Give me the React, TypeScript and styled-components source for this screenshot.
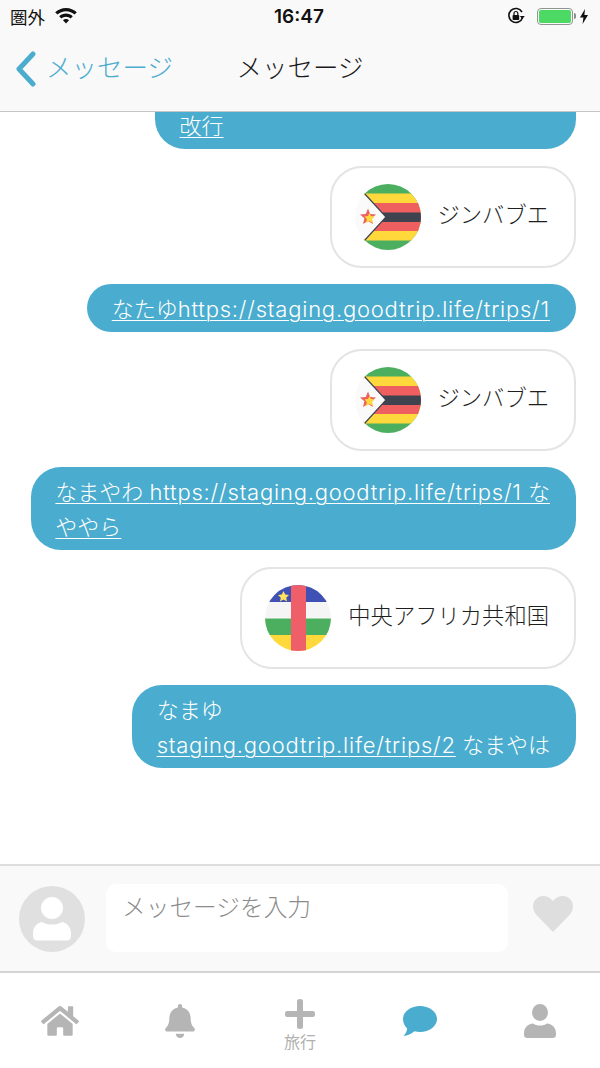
import React from 'react'
import styled, { createGlobalStyle } from 'styled-components'
import { FaBell, FaHome } from 'react-icons/fa'

const GlobalStyle = createGlobalStyle`
  html, body {
    margin: 0;
    padding: 0;
    background: #fff;
  }
`

const Screen = styled.div`
  width: 600px;
  height: 1068px;
  display: flex;
  flex-direction: column;
  overflow: hidden;
  background: #fff;
  color: #2b2b2b;
  font-family: Inter, "Noto Sans CJK JP", sans-serif;
  font-weight: 300;
`

const Header = styled.header`
  flex: none;
  height: 112px;
  box-sizing: border-box;
  background: #f9f9f9;
  border-bottom: 1px solid #c4c4c4;
`

const StatusBar = styled.div`
  height: 32px;
  padding: 0 12px 0 10px;
  display: grid;
  grid-template-columns: 1fr auto 1fr;
  align-items: center;
  color: #111;
`

const StatusLeft = styled.div`
  display: flex;
  align-items: center;
  gap: 10px;
  font-size: 17.5px;
  font-weight: 400;
`

const StatusRight = styled.div`
  display: flex;
  align-items: center;
  justify-content: flex-end;
  gap: 12px;
`

const Clock = styled.div`
  font-family: Inter, sans-serif;
  font-size: 19px;
  font-weight: 600;
`

const Battery = styled.div`
  position: relative;
  width: 36px;
  height: 17px;
  box-sizing: border-box;
  padding: 1px;
  border: 1.5px solid #8f968f;
  border-radius: 4px;
  &::before {
    content: '';
    display: block;
    height: 100%;
    border-radius: 2px;
    background: #4cd964;
  }
  &::after {
    content: '';
    position: absolute;
    top: 4px;
    right: -4px;
    width: 2px;
    height: 6px;
    border-radius: 0 2px 2px 0;
    background: #8b8b8b;
  }
`

const BatteryGroup = styled.div`
  display: flex;
  align-items: center;
  gap: 7px;
`

const NavBar = styled.nav`
  height: 79px;
  padding-bottom: 12px;
  box-sizing: border-box;
  display: grid;
  grid-template-columns: 1fr auto 1fr;
  align-items: center;
`

const BackLink = styled.div`
  display: flex;
  align-items: center;
  gap: 7px;
  padding-left: 15px;
  font-size: 25.5px;
  color: #4bacce;
`

const BackMark = styled.svg`
  margin-top: 6px;
`

const Title = styled.div`
  font-size: 25.5px;
  color: #1a1a1a;
`

const Thread = styled.main`
  flex: 1;
  min-height: 0;
  overflow: hidden;
`

const ThreadInner = styled.div`
  margin-top: -46px;
  padding-right: 24px;
  display: flex;
  flex-direction: column;
  align-items: flex-end;
  gap: 16.5px;
`

const Bubble = styled.div<{ $width?: number }>`
  box-sizing: border-box;
  width: ${p => (p.$width ? `${p.$width}px` : 'auto')};
  padding: 7.5px 26px 5.5px 24.5px;
  border-radius: 30px;
  background: #4aacce;
  color: #fff;
  font-size: 22px;
  line-height: 35px;
  white-space: nowrap;
`

const BubbleLink = styled.span`
  text-decoration: underline;
  text-underline-offset: 3px;
  text-decoration-thickness: 1px;
`

const Url = styled.span`
  letter-spacing: 0.78px;
`

const CountryCard = styled.div`
  box-sizing: border-box;
  height: 102px;
  padding: 0 25px 0 23px;
  display: flex;
  align-items: center;
  gap: 17px;
  border: 2px solid #e4e4e4;
  border-radius: 32px;
  background: #fff;
  font-size: 22.3px;
  color: #1f1f1f;
`

const CountryName = styled.span`
  margin-top: -8px;
`

const Composer = styled.div`
  flex: none;
  height: 109px;
  box-sizing: border-box;
  padding: 0 27px 0 19px;
  display: flex;
  align-items: center;
  background: #f9f9f9;
  border-top: 2px solid #dedede;
  border-bottom: 2px solid #d4d4d4;
`

const Avatar = styled.div`
  flex: none;
  width: 66px;
  height: 66px;
  border-radius: 50%;
  background: #e0e0e0;
  display: flex;
  align-items: center;
  justify-content: center;
`

const MessageInput = styled.div`
  flex: none;
  width: 402px;
  height: 68px;
  margin: -1px 25px 0 21px;
  box-sizing: border-box;
  padding: 8px 16px;
  border-radius: 10px;
  background: #fff;
  font-size: 23.7px;
  line-height: 32px;
  color: #8c8c8c;
`

const HeartMark = styled.svg`
  margin-top: -10px;
`

const TabBar = styled.footer`
  flex: none;
  height: 95px;
  display: grid;
  grid-template-columns: repeat(5, 120px);
  background: #fff;
`

const Tab = styled.div<{ $active?: boolean; $labelled?: boolean }>`
  padding-top: ${p => (p.$labelled ? '26px' : '0')};
  display: flex;
  flex-direction: column;
  align-items: center;
  justify-content: ${p => (p.$labelled ? 'flex-start' : 'center')};
  color: ${p => (p.$active ? '#4aacce' : '#b5b5b5')};
`

const TabLabel = styled.span`
  margin-top: 3px;
  font-size: 16px;
  font-weight: 400;
  line-height: 20px;
  color: #b0b0b0;
`

const ZimbabweFlag = () => (
  <svg width="66" height="66" viewBox="0 0 66 66">
    <defs>
      <clipPath id="zw">
        <circle cx="33" cy="33" r="33" />
      </clipPath>
    </defs>
    <g clipPath="url(#zw)">
      <rect x="8" width="58" height="66" fill="#4caf5f" />
      <rect x="8" y="9.5" width="58" height="47" fill="#ffd93b" />
      <rect x="8" y="19" width="58" height="28" fill="#ef5f5f" />
      <rect x="8" y="28.5" width="58" height="9.5" fill="#3f4350" />
      <path d="M0 0 L9 9 L31 33 L9 57 L0 66 Z" fill="#fafafa" />
      <path d="M9 9 L31 33 L9 57" fill="none" stroke="#3f4350" strokeWidth="1.2" />
      <path d="M13 24.5 L15.2 30 L21 30.5 L16.6 34.2 L18 40 L13 37 L8 40 L9.4 34.2 L5 30.5 L10.8 30 Z" fill="#ef5f5f" />
      <path d="M14.5 29 L16 32 L19.5 32.5 L17 35 L17.8 39 L14.5 37 L11 39 L11.8 35 L9.5 32.5 L13 32 Z" fill="#ffd93b" />
    </g>
  </svg>
)

const CentralAfricaFlag = () => (
  <svg width="66" height="66" viewBox="0 0 66 66">
    <defs>
      <clipPath id="cf">
        <circle cx="33" cy="33" r="33" />
      </clipPath>
    </defs>
    <g clipPath="url(#cf)">
      <rect width="66" height="17" fill="#3f51b5" />
      <rect y="17" width="66" height="16.5" fill="#f5f5f5" />
      <rect y="33.5" width="66" height="16.5" fill="#4caf5f" />
      <rect y="50" width="66" height="16" fill="#ffd93b" />
      <rect x="26" width="15" height="66" fill="#ef5f6a" />
      <path d="M18.5 6 L20.2 9.6 L24 10.1 L21.2 12.7 L22 16.5 L18.5 14.6 L15 16.5 L15.8 12.7 L13 10.1 L16.8 9.6 Z" fill="#ffe45c" />
    </g>
  </svg>
)

const WifiIcon = () => (
  <svg width="22" height="16" viewBox="0 0 22 16" fill="#111">
    <path d="M11 0 C6.8 0 3 1.6 0.2 4.3 L2.4 6.6 C4.7 4.5 7.7 3.2 11 3.2 C14.3 3.2 17.3 4.5 19.6 6.6 L21.8 4.3 C19 1.6 15.2 0 11 0 Z" />
    <path d="M11 5.6 C8.4 5.6 6 6.6 4.2 8.3 L6.4 10.6 C7.6 9.5 9.2 8.8 11 8.8 C12.8 8.8 14.4 9.5 15.6 10.6 L17.8 8.3 C16 6.6 13.6 5.6 11 5.6 Z" />
    <path d="M11 11 C9.8 11 8.8 11.4 8 12.2 L11 15.6 L14 12.2 C13.2 11.4 12.2 11 11 11 Z" />
  </svg>
)

const RotationLockIcon = () => (
  <svg width="18" height="18" viewBox="0 0 18 18">
    <path d="M15.6 10.5 A7 7 0 1 1 15 5" fill="none" stroke="#111" strokeWidth="1.6" />
    <path d="M12.8 9 L17.8 9 L15.3 12 Z" fill="#111" />
    <rect x="5.6" y="8" width="6.6" height="5" rx="0.8" fill="#111" />
    <path d="M7 8 V6.4 A1.9 1.9 0 0 1 10.8 6.4 V8" fill="none" stroke="#111" strokeWidth="1.2" />
  </svg>
)

const BoltIcon = () => (
  <svg width="8" height="15" viewBox="0 0 8 15" fill="#111">
    <path d="M5 0 L0 8.5 L3.4 8.5 L2.6 15 L8 6 L4.4 6 Z" />
  </svg>
)

const BackChevron = () => (
  <BackMark width="24" height="36" viewBox="0 0 24 36">
    <path d="M18 3 L4 18 L18 33" fill="none" stroke="#4bacce" strokeWidth="5" strokeLinecap="round" strokeLinejoin="round" />
  </BackMark>
)

const AvatarGlyph = () => (
  <svg width="38" height="44" viewBox="0 0 38 44" fill="#fff">
    <circle cx="19" cy="11" r="11" />
    <path d="M9 25 C12 27 15.5 27.5 19 27.5 C22.5 27.5 26 27 29 25 C34 26 38 30 38 36 V39 C38 42 36 43.5 34 43.5 H4 C2 43.5 0 42 0 39 V36 C0 30 4 26 9 25 Z" />
  </svg>
)

const HeartIcon = () => (
  <HeartMark width="40" height="38" viewBox="0 0 40 38" fill="#dedede">
    <path d="M20 37 L3.5 20 C-1 15 -1 8 3 4 C7.5 -0.5 15 0 20 6 C25 0 32.5 -0.5 37 4 C41 8 41 15 36.5 20 Z" />
  </HeartMark>
)

const PlusIcon = () => (
  <svg width="30" height="30" viewBox="0 0 30 30" fill="currentColor">
    <path d="M12 2 C12 0.8 13 0 15 0 C17 0 18 0.8 18 2 V12 H28 C29.2 12 30 13 30 15 C30 17 29.2 18 28 18 H18 V28 C18 29.2 17 30 15 30 C13 30 12 29.2 12 28 V18 H2 C0.8 18 0 17 0 15 C0 13 0.8 12 2 12 H12 Z" />
  </svg>
)

const ChatIcon = () => (
  <svg width="34" height="30" viewBox="0 0 34 30" fill="currentColor">
    <path d="M17 0 C26.4 0 34 5.8 34 13 C34 20.2 26.4 26 17 26 C15 26 13.2 25.8 11.4 25.3 C8.6 28 4.6 29.8 0.4 30 C2.4 28 3.8 25.6 4.2 22.4 C1.6 20 0 16.7 0 13 C0 5.8 7.6 0 17 0 Z" />
  </svg>
)

const UserIcon = () => (
  <svg width="32" height="34" viewBox="0 0 32 34" fill="currentColor">
    <ellipse cx="16" cy="8.5" rx="8" ry="8.5" />
    <path d="M9 19.5 C11 21 13.4 21.6 16 21.6 C18.6 21.6 21 21 23 19.5 C28.5 20 32 24 32 29 V31 C32 33 30.6 34 29 34 H3 C1.4 34 0 33 0 31 V29 C0 24 3.5 20 9 19.5 Z" />
  </svg>
)

const App: React.FC = () => {
  return (
    <Screen>
      <GlobalStyle />
      <Header>
        <StatusBar>
          <StatusLeft>
            圏外
            <WifiIcon />
          </StatusLeft>
          <Clock>16:47</Clock>
          <StatusRight>
            <RotationLockIcon />
            <BatteryGroup>
              <Battery />
              <BoltIcon />
            </BatteryGroup>
          </StatusRight>
        </StatusBar>
        <NavBar>
          <BackLink>
            <BackChevron />
            メッセージ
          </BackLink>
          <Title>メッセージ</Title>
        </NavBar>
      </Header>
      <Thread>
        <ThreadInner>
          <Bubble $width={421}>
            <br />
            <BubbleLink>改行</BubbleLink>
          </Bubble>
          <CountryCard>
            <ZimbabweFlag />
            <CountryName>ジンバブエ</CountryName>
          </CountryCard>
          <Bubble>
            <BubbleLink>
              なたゆ<Url>https://staging.goodtrip.life/trips/1</Url>
            </BubbleLink>
          </Bubble>
          <CountryCard>
            <ZimbabweFlag />
            <CountryName>ジンバブエ</CountryName>
          </CountryCard>
          <Bubble>
            <BubbleLink>
              なまやわ <Url>https://staging.goodtrip.life/trips/1</Url> な
              <br />
              ややら
            </BubbleLink>
          </Bubble>
          <CountryCard>
            <CentralAfricaFlag />
            <CountryName>中央アフリカ共和国</CountryName>
          </CountryCard>
          <Bubble>
            なまゆ
            <br />
            <BubbleLink>
              <Url>staging.goodtrip.life/trips/2</Url>
            </BubbleLink>{' '}
            なまやは
          </Bubble>
        </ThreadInner>
      </Thread>
      <Composer>
        <Avatar>
          <AvatarGlyph />
        </Avatar>
        <MessageInput>メッセージを入力</MessageInput>
        <HeartIcon />
      </Composer>
      <TabBar>
        <Tab>
          <FaHome size={38} />
        </Tab>
        <Tab>
          <FaBell size={34} />
        </Tab>
        <Tab $labelled>
          <PlusIcon />
          <TabLabel>旅行</TabLabel>
        </Tab>
        <Tab $active>
          <ChatIcon />
        </Tab>
        <Tab>
          <UserIcon />
        </Tab>
      </TabBar>
    </Screen>
  )
}

export default App
